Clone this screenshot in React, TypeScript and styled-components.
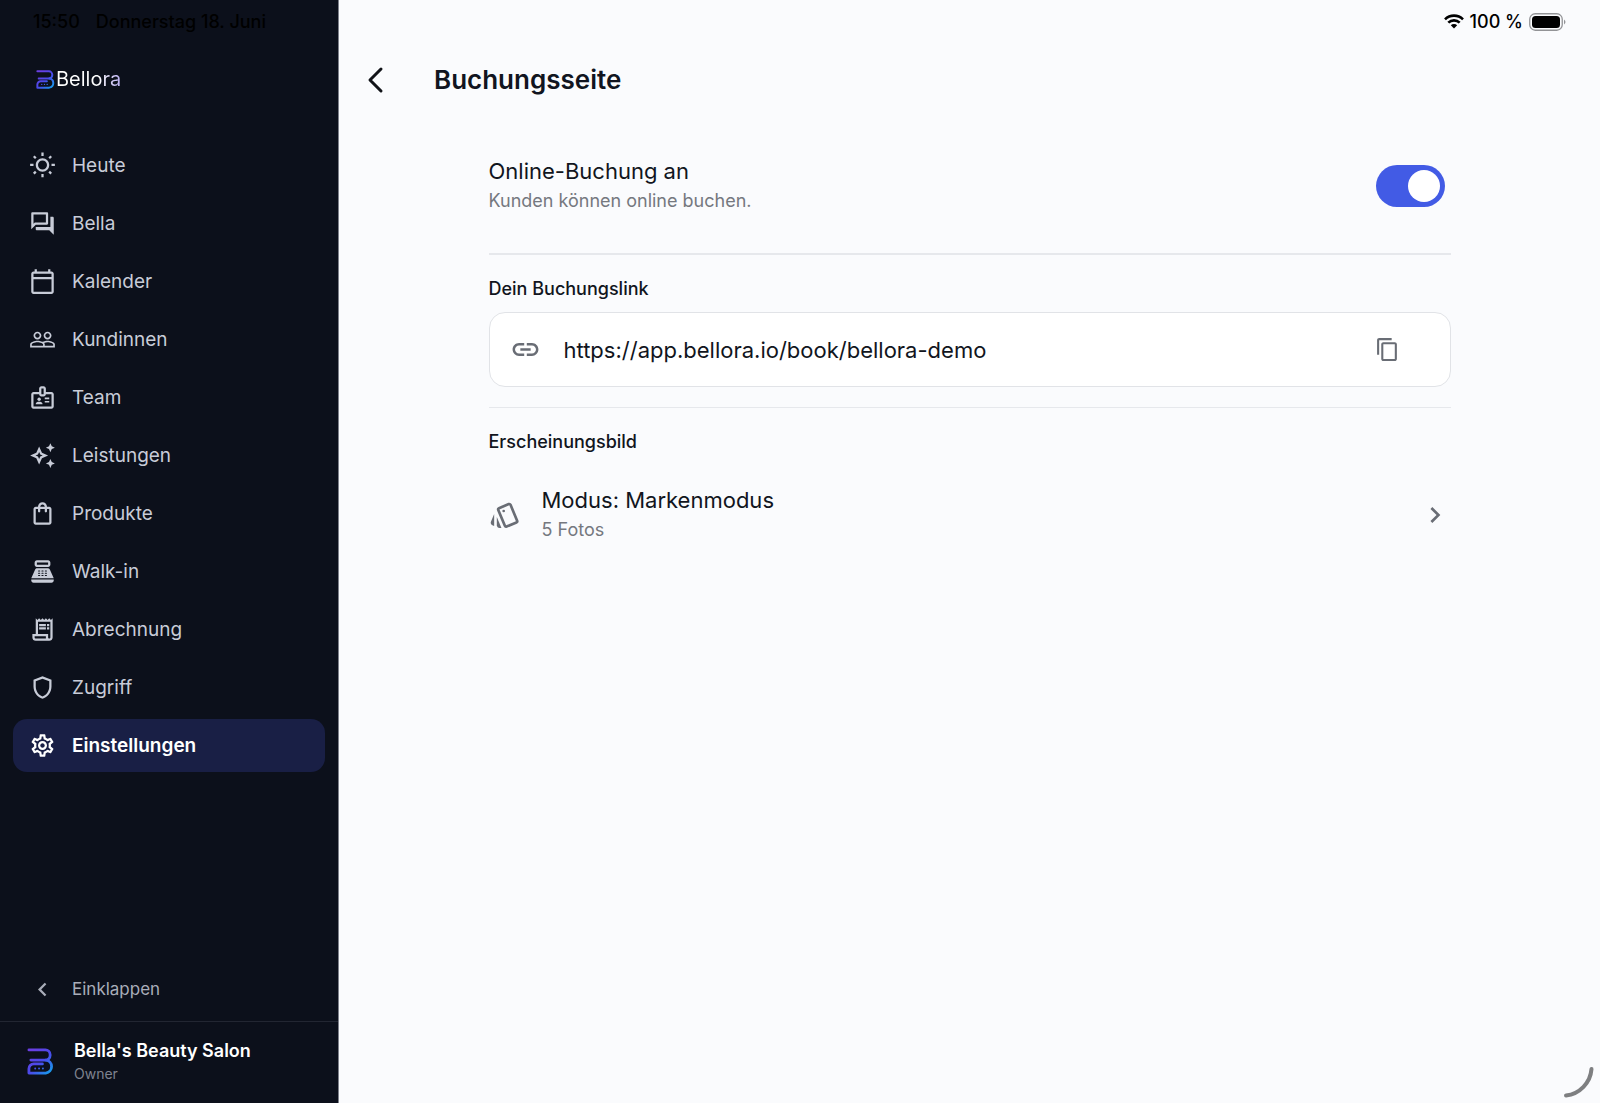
import React, { useId, useState } from "react";
import styled, { createGlobalStyle } from "styled-components";
import {
  MdChevronLeft,
  MdChevronRight,
  MdContentCopy,
  MdLink,
  MdOutlineAutoAwesome,
  MdOutlineBadge,
  MdOutlineCalendarToday,
  MdOutlineForum,
  MdOutlinePointOfSale,
  MdOutlineReceiptLong,
  MdOutlineSettings,
  MdOutlineShield,
  MdOutlineShoppingBag,
  MdOutlineStyle,
  MdOutlineWbSunny,
  MdPeopleOutline,
} from "react-icons/md";

const GlobalStyle = createGlobalStyle`
  *, *::before, *::after { box-sizing: border-box; }
  body {
    margin: 0;
    background: #fafbfd;
    color: #111520;
    font-family: Inter, "Liberation Sans", sans-serif;
  }
  button, input { font: inherit; color: inherit; }
  button { margin: 0; padding: 0; border: 0; background: none; cursor: pointer; text-align: left; }
  h1, h2, p { margin: 0; }
  svg { display: block; flex: none; }
`;

const Shell = styled.div`
  display: flex;
  min-height: 100vh;
`;

const Sidebar = styled.aside`
  display: flex;
  flex-direction: column;
  flex: none;
  width: 339px;
  background: #0c101b;
  border-right: 1px solid #7d808a;
`;

const DateLine = styled.div`
  display: flex;
  gap: 16px;
  padding: 10px 33px 0;
  color: #000;
  font-size: 18px;
  font-weight: 500;
  line-height: 24px;
`;

const Brand = styled.a`
  display: flex;
  align-items: center;
  gap: 1px;
  margin-top: 33px;
  padding-left: 36px;
  height: 24px;
  text-decoration: none;
`;

const BrandName = styled.span`
  font-size: 20px;
  line-height: 24px;
  background: linear-gradient(90deg, #fff 65%, #b9aef0);
  background-clip: text;
  color: transparent;
`;

const Nav = styled.nav`
  display: flex;
  flex-direction: column;
  gap: 5px;
  padding: 48px 13px 0;
`;

const NavItem = styled.a<{ $active?: boolean }>`
  display: flex;
  align-items: center;
  gap: 16px;
  height: 53px;
  padding: 0 16px;
  border-radius: 14px;
  background: ${(p) => (p.$active ? "#191f45" : "transparent")};
  color: ${(p) => (p.$active ? "#fff" : "#c8ccd8")};
  font-size: 19px;
  font-weight: ${(p) => (p.$active ? 600 : 400)};
  line-height: 24px;
  text-decoration: none;
`;

const SidebarFoot = styled.div`
  margin-top: auto;
`;

const Collapse = styled.button`
  display: flex;
  align-items: center;
  gap: 16px;
  width: 100%;
  height: 64px;
  padding: 0 29px;
  color: #a9adb9;
  font-size: 17px;
  line-height: 24px;
`;

const Account = styled.button`
  display: flex;
  align-items: center;
  gap: 20px;
  width: 100%;
  height: 82px;
  padding: 0 27px 2px;
  border-top: 1px solid #222632;
`;

const AccountText = styled.span`
  display: flex;
  flex-direction: column;
`;

const AccountName = styled.span`
  color: #fff;
  font-size: 18px;
  font-weight: 600;
  line-height: 24px;
`;

const AccountRole = styled.span`
  color: #7f8390;
  font-size: 14px;
  line-height: 22px;
`;

const Main = styled.main`
  flex: 1;
  min-width: 0;
`;

const StatusBar = styled.div`
  display: flex;
  align-items: center;
  justify-content: flex-end;
  gap: 6px;
  height: 43px;
  padding-right: 34px;
  color: #000;
  font-size: 18px;
  font-weight: 500;
  line-height: 24px;
`;

const Header = styled.header`
  display: flex;
  align-items: center;
  gap: 48px;
  height: 74px;
  padding-left: 25px;
`;

const Title = styled.h1`
  font-size: 26px;
  font-weight: 600;
  line-height: 32px;
`;

const Content = styled.div`
  width: 100%;
  max-width: 962px;
  margin: 0 auto;
`;

const Section = styled.section<{ $rule?: number }>`
  border-top: ${(p) => p.$rule ?? 1}px solid #e6e8ec;
  padding: 20px 0;
`;

const SettingRow = styled.label`
  display: flex;
  align-items: center;
  justify-content: space-between;
  padding: 39px 6px 38px 0;
  cursor: pointer;
`;

const Lines = styled.span`
  display: flex;
  flex-direction: column;
  flex: 1;
`;

const Primary = styled.span`
  font-size: 22px;
  line-height: 30px;
`;

const Secondary = styled.span`
  color: #75787f;
  font-size: 18px;
  line-height: 29px;
`;

const Switch = styled.input`
  appearance: none;
  flex: none;
  width: 69px;
  height: 42px;
  margin: 0;
  padding: 5px;
  border-radius: 21px;
  background: #b7bbc6;
  cursor: pointer;

  &::before {
    content: "";
    display: block;
    width: 32px;
    height: 32px;
    border-radius: 50%;
    background: #fff;
  }
  &:checked { background: #425be5; }
  &:checked::before { margin-left: auto; }
`;

const SectionTitle = styled.h2`
  font-size: 18px;
  font-weight: 500;
  line-height: 28px;
`;

const LinkCard = styled.div`
  display: flex;
  align-items: center;
  gap: 23px;
  height: 75px;
  margin-top: 9px;
  padding: 0 50px 0 20px;
  border: 1px solid #e1e3e7;
  border-radius: 16px;
  background: #fff;
  color: #696d75;
`;

const LinkText = styled.a`
  flex: 1;
  color: #111520;
  font-size: 22px;
  line-height: 30px;
  text-decoration: none;
`;

const IconButton = styled.button`
  display: grid;
  place-items: center;
`;

const ModeRow = styled.button`
  display: flex;
  align-items: center;
  gap: 21px;
  width: 100%;
  margin-top: 29px;
  color: #696d75;

  ${Primary} { color: #111520; }
`;

const Corner = styled.svg`
  position: fixed;
  right: 4px;
  bottom: 4px;
`;

function Mark({ size }: { size: number }) {
  const id = useId();
  return (
    <svg width={size} height={size} viewBox="0 0 28 28" fill="none" aria-hidden="true">
      <defs>
        <linearGradient id={id} x1="4" y1="3" x2="26" y2="26" gradientUnits="userSpaceOnUse">
          <stop stopColor="#6a3fe2" />
          <stop offset=".5" stopColor="#4a4aea" />
          <stop offset="1" stopColor="#12a3ec" />
        </linearGradient>
      </defs>
      <g stroke={`url(#${id})`} strokeWidth="2.9" strokeLinecap="round" strokeLinejoin="round">
        <path d="M2 2H19a5 5 0 0 1 5 5v.5a5 5 0 0 1-5 5H4" />
        <path d="M19.500 12.500a6.800 6.800 0 0 1 0 13.500H2V21.500a5 5 0 0 1 5-5h9" />
      </g>
      <g fill={`url(#${id})`}>
        <circle cx="8.500" cy="21.200" r="1" />
        <circle cx="12.500" cy="21.200" r="1" />
        <circle cx="16.500" cy="21.200" r="1" />
      </g>
    </svg>
  );
}

const items = [
  { label: "Heute", Icon: MdOutlineWbSunny },
  { label: "Bella", Icon: MdOutlineForum },
  { label: "Kalender", Icon: MdOutlineCalendarToday },
  { label: "Kundinnen", Icon: MdPeopleOutline },
  { label: "Team", Icon: MdOutlineBadge },
  { label: "Leistungen", Icon: MdOutlineAutoAwesome },
  { label: "Produkte", Icon: MdOutlineShoppingBag },
  { label: "Walk-in", Icon: MdOutlinePointOfSale },
  { label: "Abrechnung", Icon: MdOutlineReceiptLong },
  { label: "Zugriff", Icon: MdOutlineShield },
  { label: "Einstellungen", Icon: MdOutlineSettings },
];

export default function App() {
  const [online, setOnline] = useState(true);
  return (
    <>
      <GlobalStyle />
      <Shell>
        <Sidebar>
          <DateLine>
            <span>15:50</span>
            <span>Donnerstag 18. Juni</span>
          </DateLine>
          <Brand href="#">
            <Mark size={19} />
            <BrandName>Bellora</BrandName>
          </Brand>
          <Nav>
            {items.map(({ label, Icon }) => (
              <NavItem key={label} href="#" $active={label === "Einstellungen"}>
                <Icon size={27} />
                {label}
              </NavItem>
            ))}
          </Nav>
          <SidebarFoot>
            <Collapse type="button">
              <MdChevronLeft size={27} />
              Einklappen
            </Collapse>
            <Account type="button">
              <Mark size={27} />
              <AccountText>
                <AccountName>Bella's Beauty Salon</AccountName>
                <AccountRole>Owner</AccountRole>
              </AccountText>
            </Account>
          </SidebarFoot>
        </Sidebar>
        <Main>
          <StatusBar>
            <svg width="20" height="15" viewBox="0 0 20 15" aria-hidden="true">
              <g fill="none" stroke="#000" strokeWidth="2.600">
                <path d="M1 5.300a12.800 12.800 0 0 1 18 0" />
                <path d="M4.300 8.700a8.100 8.100 0 0 1 11.400 0" />
              </g>
              <path d="M10 14.500 6.800 11.300a4.600 4.600 0 0 1 6.400 0z" />
            </svg>
            <span>100 %</span>
            <svg width="37" height="18" viewBox="0 0 37 18" aria-hidden="true">
              <rect x=".75" y=".75" width="32.500" height="16.500" rx="5.500" fill="none" stroke="#929396" strokeWidth="1.300" />
              <rect x="3" y="3" width="28" height="12" rx="3.500" />
              <path d="M35 6.500q3 2.500 0 5z" fill="#929396" />
            </svg>
          </StatusBar>
          <Header>
            <IconButton type="button" aria-label="Zurück">
              <svg width="22" height="28" viewBox="0 0 22 28" fill="none" stroke="#111318" strokeWidth="3" strokeLinecap="round" strokeLinejoin="round">
                <path d="M17 3 6 14l11 11" />
              </svg>
            </IconButton>
            <Title>Buchungsseite</Title>
          </Header>
          <Content>
            <SettingRow>
              <Lines>
                <Primary>Online-Buchung an</Primary>
                <Secondary>Kunden können online buchen.</Secondary>
              </Lines>
              <Switch type="checkbox" role="switch" checked={online} onChange={(e) => setOnline(e.target.checked)} />
            </SettingRow>
            <Section $rule={2}>
              <SectionTitle>Dein Buchungslink</SectionTitle>
              <LinkCard>
                <MdLink size={31} />
                <LinkText href="#">https://app.bellora.io/book/bellora-demo</LinkText>
                <IconButton type="button" aria-label="Link kopieren">
                  <MdContentCopy size={25} />
                </IconButton>
              </LinkCard>
            </Section>
            <Section>
              <SectionTitle>Erscheinungsbild</SectionTitle>
              <ModeRow type="button">
                <MdOutlineStyle size={32} />
                <Lines>
                  <Primary>Modus: Markenmodus</Primary>
                  <Secondary>5 Fotos</Secondary>
                </Lines>
                <MdChevronRight size={32} />
              </ModeRow>
            </Section>
          </Content>
        </Main>
      </Shell>
      <Corner width="34" height="34" viewBox="0 0 34 34" fill="none" aria-hidden="true">
        <path d="M29.500 4A29 29 0 0 1 4 30.500" stroke="#7e7f81" strokeWidth="4" strokeLinecap="round" />
      </Corner>
    </>
  );
}
